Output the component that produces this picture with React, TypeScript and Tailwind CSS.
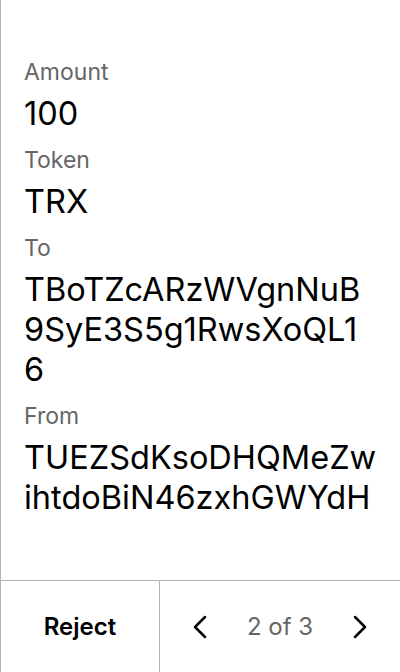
import React from "react";

const Field = ({ label, lines }: { label: string; lines: string[] }) => (
  <div className="flex flex-col gap-2">
    <div className="text-[23px] leading-[28px] text-[#666666]">{label}</div>
    <div className="text-[32.5px] leading-[40px] text-black break-all">
      {lines.map((l, i) => (
        <div key={i}>{l}</div>
      ))}
    </div>
  </div>
);

export default function App() {
  return (
    <div
      className="w-[400px] h-[672px] flex flex-col bg-white border-l border-[#b3b3b3]"
      style={{ fontFamily: "Inter, 'Noto Sans', sans-serif" }}
    >
      <div className="flex-1 flex flex-col gap-3 pt-[58px] pl-[23px] pr-4">
        <Field label="Amount" lines={["100"]} />
        <Field label="Token" lines={["TRX"]} />
        <Field label="To" lines={["TBoTZcARzWVgnNuB", "9SyE3S5g1RwsXoQL1", "6"]} />
        <Field label="From" lines={["TUEZSdKsoDHQMeZw", "ihtdoBiN46zxhGWYdH"]} />
      </div>
      <div className="h-[92px] flex border-t border-[#b3b3b3]">
        <div className="w-[159px] flex items-center justify-center border-r border-[#b3b3b3]">
          <span className="text-[24px] font-semibold text-black">Reject</span>
        </div>
        <div className="flex-1 flex items-center justify-between pl-[32px] pr-[32px]">
          <svg width="16" height="24" viewBox="0 0 16 24" fill="none" stroke="black" strokeWidth="2.5" strokeLinecap="round" strokeLinejoin="round">
            <path d="M13 2 L3 12 L13 22" />
          </svg>
          <span className="text-[24px] text-[#666666]">2 of 3</span>
          <svg width="16" height="24" viewBox="0 0 16 24" fill="none" stroke="black" strokeWidth="2.5" strokeLinecap="round" strokeLinejoin="round">
            <path d="M3 2 L13 12 L3 22" />
          </svg>
        </div>
      </div>
    </div>
  );
}
